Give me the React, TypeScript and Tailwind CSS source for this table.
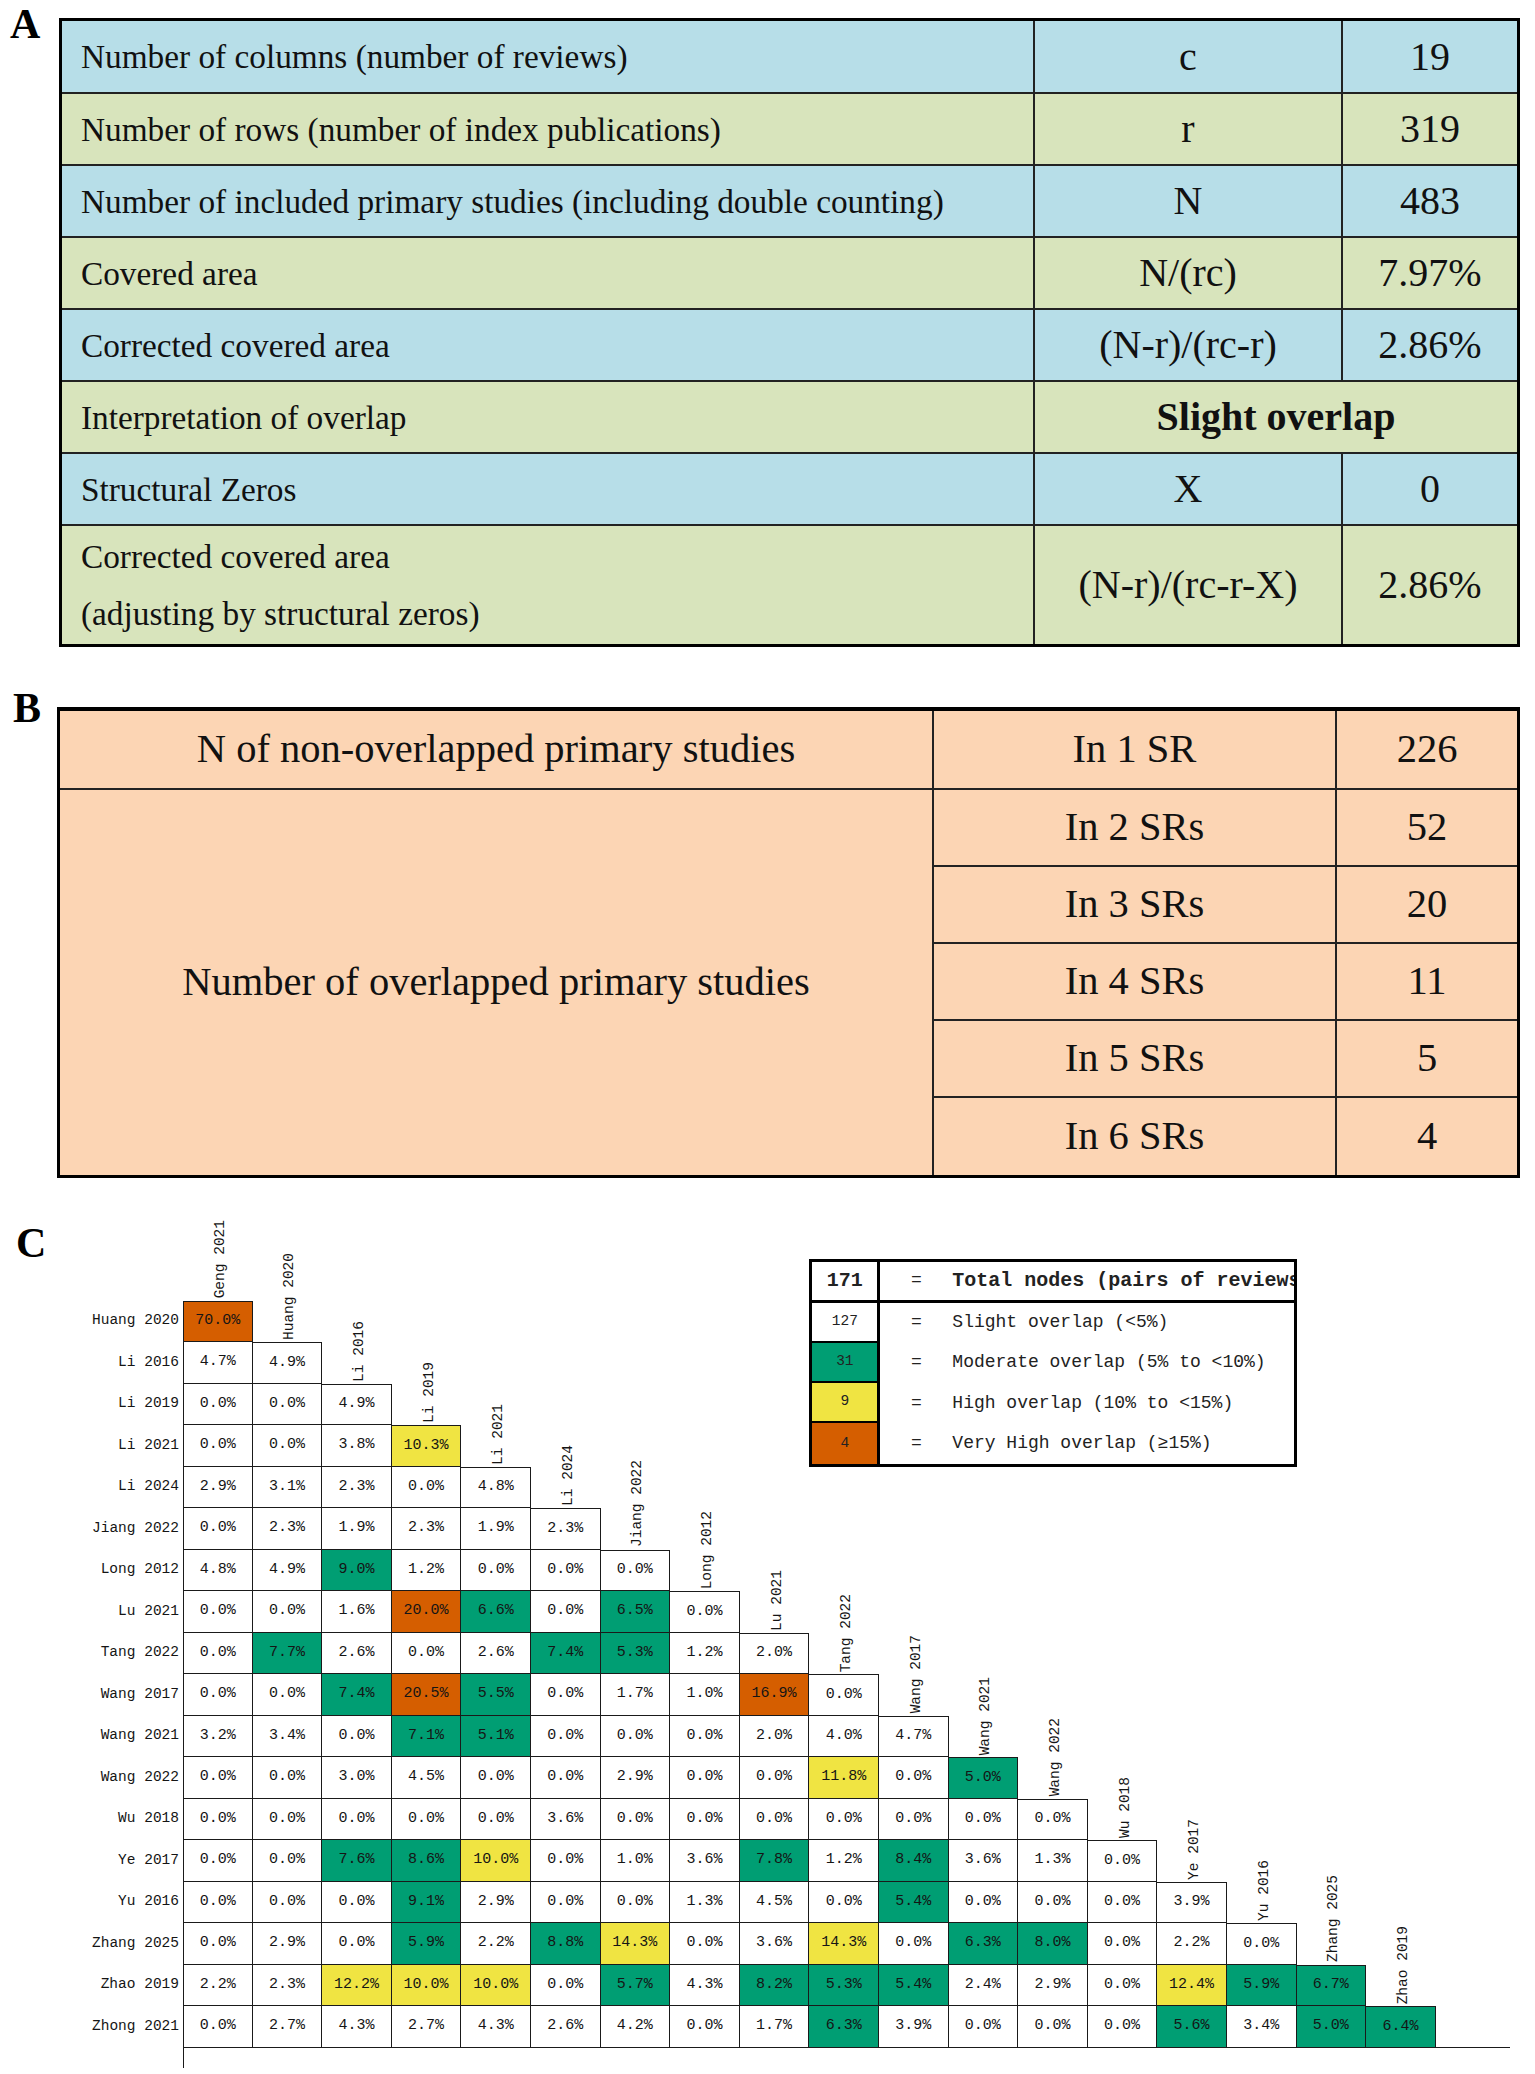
import React from "react"

const serif = "font-['Liberation_Serif','Times_New_Roman',serif]"
const mono = "font-['Liberation_Mono','Courier_New',monospace]"

const tableA = [
  { label: ["Number of columns (number of reviews)"], sym: "c", val: "19", bg: "bg-[#b7dee8]" },
  { label: ["Number of rows (number of index publications)"], sym: "r", val: "319", bg: "bg-[#d8e4bc]" },
  { label: ["Number of included primary studies (including double counting)"], sym: "N", val: "483", bg: "bg-[#b7dee8]" },
  { label: ["Covered area"], sym: "N/(rc)", val: "7.97%", bg: "bg-[#d8e4bc]" },
  { label: ["Corrected covered area"], sym: "(N-r)/(rc-r)", val: "2.86%", bg: "bg-[#b7dee8]" },
  { label: ["Interpretation of overlap"], sym: "Slight overlap", val: "", bg: "bg-[#d8e4bc]" },
  { label: ["Structural Zeros"], sym: "X", val: "0", bg: "bg-[#b7dee8]" },
  { label: ["Corrected covered area", "(adjusting by structural zeros)"], sym: "(N-r)/(rc-r-X)", val: "2.86%", bg: "bg-[#d8e4bc]" },
]

const overlapRows = [
  ["In 2 SRs", "52"],
  ["In 3 SRs", "20"],
  ["In 4 SRs", "11"],
  ["In 5 SRs", "5"],
  ["In 6 SRs", "4"],
]

const names = [
  "Geng 2021", "Huang 2020", "Li 2016", "Li 2019", "Li 2021", "Li 2024", "Jiang 2022", "Long 2012", "Lu 2021",
  "Tang 2022", "Wang 2017", "Wang 2021", "Wang 2022", "Wu 2018", "Ye 2017", "Yu 2016", "Zhang 2025", "Zhao 2019",
]

const matrix: [string, number[]][] = [
  ["Huang 2020", [70.0]],
  ["Li 2016", [4.7, 4.9]],
  ["Li 2019", [0, 0, 4.9]],
  ["Li 2021", [0, 0, 3.8, 10.3]],
  ["Li 2024", [2.9, 3.1, 2.3, 0, 4.8]],
  ["Jiang 2022", [0, 2.3, 1.9, 2.3, 1.9, 2.3]],
  ["Long 2012", [4.8, 4.9, 9.0, 1.2, 0, 0, 0]],
  ["Lu 2021", [0, 0, 1.6, 20.0, 6.6, 0, 6.5, 0]],
  ["Tang 2022", [0, 7.7, 2.6, 0, 2.6, 7.4, 5.3, 1.2, 2.0]],
  ["Wang 2017", [0, 0, 7.4, 20.5, 5.5, 0, 1.7, 1.0, 16.9, 0]],
  ["Wang 2021", [3.2, 3.4, 0, 7.1, 5.1, 0, 0, 0, 2.0, 4.0, 4.7]],
  ["Wang 2022", [0, 0, 3.0, 4.5, 0, 0, 2.9, 0, 0, 11.8, 0, 5.0]],
  ["Wu 2018", [0, 0, 0, 0, 0, 3.6, 0, 0, 0, 0, 0, 0, 0]],
  ["Ye 2017", [0, 0, 7.6, 8.6, 10.0, 0, 1.0, 3.6, 7.8, 1.2, 8.4, 3.6, 1.3, 0]],
  ["Yu 2016", [0, 0, 0, 9.1, 2.9, 0, 0, 1.3, 4.5, 0, 5.4, 0, 0, 0, 3.9]],
  ["Zhang 2025", [0, 2.9, 0, 5.9, 2.2, 8.8, 14.3, 0, 3.6, 14.3, 0, 6.3, 8.0, 0, 2.2, 0]],
  ["Zhao 2019", [2.2, 2.3, 12.2, 10.0, 10.0, 0, 5.7, 4.3, 8.2, 5.3, 5.4, 2.4, 2.9, 0, 12.4, 5.9, 6.7]],
  ["Zhong 2021", [0, 2.7, 4.3, 2.7, 4.3, 2.6, 4.2, 0, 1.7, 6.3, 3.9, 0, 0, 0, 5.6, 3.4, 5.0, 6.4]],
]

function cellBg(v: number) {
  if (v >= 15) return "bg-[#d55e00]"
  if (v >= 10) return "bg-[#f0e442]"
  if (v >= 5) return "bg-[#009e73]"
  return "bg-white"
}

function SummaryTable() {
  return (
    <div className="flex">
      <div className={`w-[59px] shrink-0 pl-[10px] pt-[2px] text-[42px] font-bold leading-[44px] ${serif}`}>A</div>
      <div className={`mt-[18px] w-[1461px] border-[3px] border-black text-[#111] ${serif}`}>
        {tableA.map((row, i) => {
          const last = i === tableA.length - 1
          const h = i === 0 ? "h-[73px]" : last ? "h-[118px]" : "h-[72px]"
          return (
            <div
              key={i}
              className={`grid grid-cols-[973px_308px_1fr] ${h} ${row.bg} ${last ? "" : "border-b-2 border-[#222]"}`}
            >
              <div className="flex flex-col justify-center border-r-2 border-[#222] pl-[19px] text-[33.3px] leading-[57px]">
                {row.label.map((l) => (
                  <span key={l}>{l}</span>
                ))}
              </div>
              {row.val === "" ? (
                <div className="col-span-2 flex items-center justify-center text-[40px] font-bold">{row.sym}</div>
              ) : (
                <>
                  <div className="flex items-center justify-center border-r-2 border-[#222] text-[40px]">{row.sym}</div>
                  <div className="flex items-center justify-center text-[40px]">{row.val}</div>
                </>
              )}
            </div>
          )
        })}
      </div>
    </div>
  )
}

function StudiesTable() {
  return (
    <div className="mt-[40px] flex">
      <div className={`w-[57px] shrink-0 pl-[13px] text-[42px] font-bold leading-none ${serif}`}>B</div>
      <div
        className={`mt-[20px] grid w-[1463px] grid-cols-[874px_403px_1fr] grid-rows-[79px_repeat(5,77px)] border-x-[3px] border-t-4 border-b-[3px] border-black bg-[#fcd5b4] text-[40.5px] text-[#111] ${serif}`}
      >
        <div className="flex items-center justify-center border-r-2 border-b-2 border-[#222]">
          N of non-overlapped primary studies
        </div>
        <div className="flex items-center justify-center border-r-2 border-b-2 border-[#222]">In 1 SR</div>
        <div className="flex items-center justify-center border-b-2 border-[#222]">226</div>
        <div className="row-span-5 flex items-center justify-center border-r-2 border-[#222]">
          Number of overlapped primary studies
        </div>
        {overlapRows.map(([a, b], i) => (
          <React.Fragment key={a}>
            <div className={`flex items-center justify-center border-r-2 border-[#222] ${i < 4 ? "border-b-2" : ""}`}>{a}</div>
            <div className={`flex items-center justify-center border-[#222] ${i < 4 ? "border-b-2" : ""}`}>{b}</div>
          </React.Fragment>
        ))}
      </div>
    </div>
  )
}

function Legend() {
  const items = [
    { n: "127", text: "Slight overlap (<5%)", bg: "bg-white" },
    { n: "31", text: "Moderate overlap (5% to <10%)", bg: "bg-[#009e73]" },
    { n: "9", text: "High overlap (10% to <15%)", bg: "bg-[#f0e442]" },
    { n: "4", text: "Very High overlap (≥15%)", bg: "bg-[#d55e00]" },
  ]
  return (
    <div
      className={`col-span-7 col-start-11 row-span-5 row-start-2 grid grid-cols-[68px_1fr] grid-rows-[40.5px_repeat(4,1fr)] border-[3px] border-black bg-white text-[#222] ${mono}`}
    >
      <div className="flex items-center justify-center border-r-[3px] border-b-[3px] border-black text-[20px] font-bold">
        171
      </div>
      <div className="flex items-center overflow-hidden whitespace-nowrap border-b-[3px] border-black">
        <span className="w-[72px] shrink-0 text-center text-[18px]">=</span>
        <span className="text-[20px] font-bold">Total nodes (pairs of reviews)</span>
      </div>
      {items.map((it, i) => (
        <React.Fragment key={it.n}>
          <div
            className={`flex items-center justify-center border-r-[3px] border-black text-[14.5px] ${it.bg} ${i < 3 ? "border-b-2" : ""}`}
          >
            {it.n}
          </div>
          <div className="flex items-center whitespace-nowrap text-[18px]">
            <span className="w-[72px] shrink-0 text-center">=</span>
            <span>{it.text}</span>
          </div>
        </React.Fragment>
      ))}
    </div>
  )
}

function OverlapMatrix() {
  return (
    <div
      className={`mt-[37px] grid grid-cols-[183px_repeat(18,69.6px)_74px] grid-rows-[44px_repeat(19,41.5px)_20px] text-[14.5px] text-[#151515] ${mono}`}
    >
      <div className={`col-start-1 row-span-2 row-start-1 pl-[16px] pt-[7px] text-[42px] font-bold leading-none text-black ${serif}`}>
        C
      </div>

      {names.map((n, j) => (
        <div key={n} className="flex h-full items-end justify-center" style={{ gridColumn: j + 2, gridRow: j + 2 }}>
          <span className="mb-[2px] ml-[4px] rotate-180 whitespace-nowrap leading-[16px] [writing-mode:vertical-rl]">{n}</span>
        </div>
      ))}

      {matrix.map(([label, vals], i) => (
        <React.Fragment key={label}>
          <div className="flex items-center justify-end pr-[4px] whitespace-nowrap" style={{ gridColumn: 1, gridRow: i + 3 }}>
            {label}
          </div>
          {vals.map((v, j) => (
            <div
              key={j}
              className={`flex items-center justify-center border-r border-b border-[#1a1a1a] text-[15px] ${cellBg(v)} ${j === i ? "border-t" : ""} ${j === 0 ? "border-l" : ""}`}
              style={{ gridColumn: j + 2, gridRow: i + 3 }}
            >
              {v.toFixed(1)}%
            </div>
          ))}
        </React.Fragment>
      ))}

      <div className="col-start-20 row-start-20 border-b border-[#1a1a1a]" />
      <div className="col-start-2 row-start-21 border-l border-[#1a1a1a]" />

      <Legend />
    </div>
  )
}

export default function App() {
  return (
    <div className="h-[2074px] w-[1535px] overflow-hidden bg-white">
      <SummaryTable />
      <StudiesTable />
      <OverlapMatrix />
    </div>
  )
}
